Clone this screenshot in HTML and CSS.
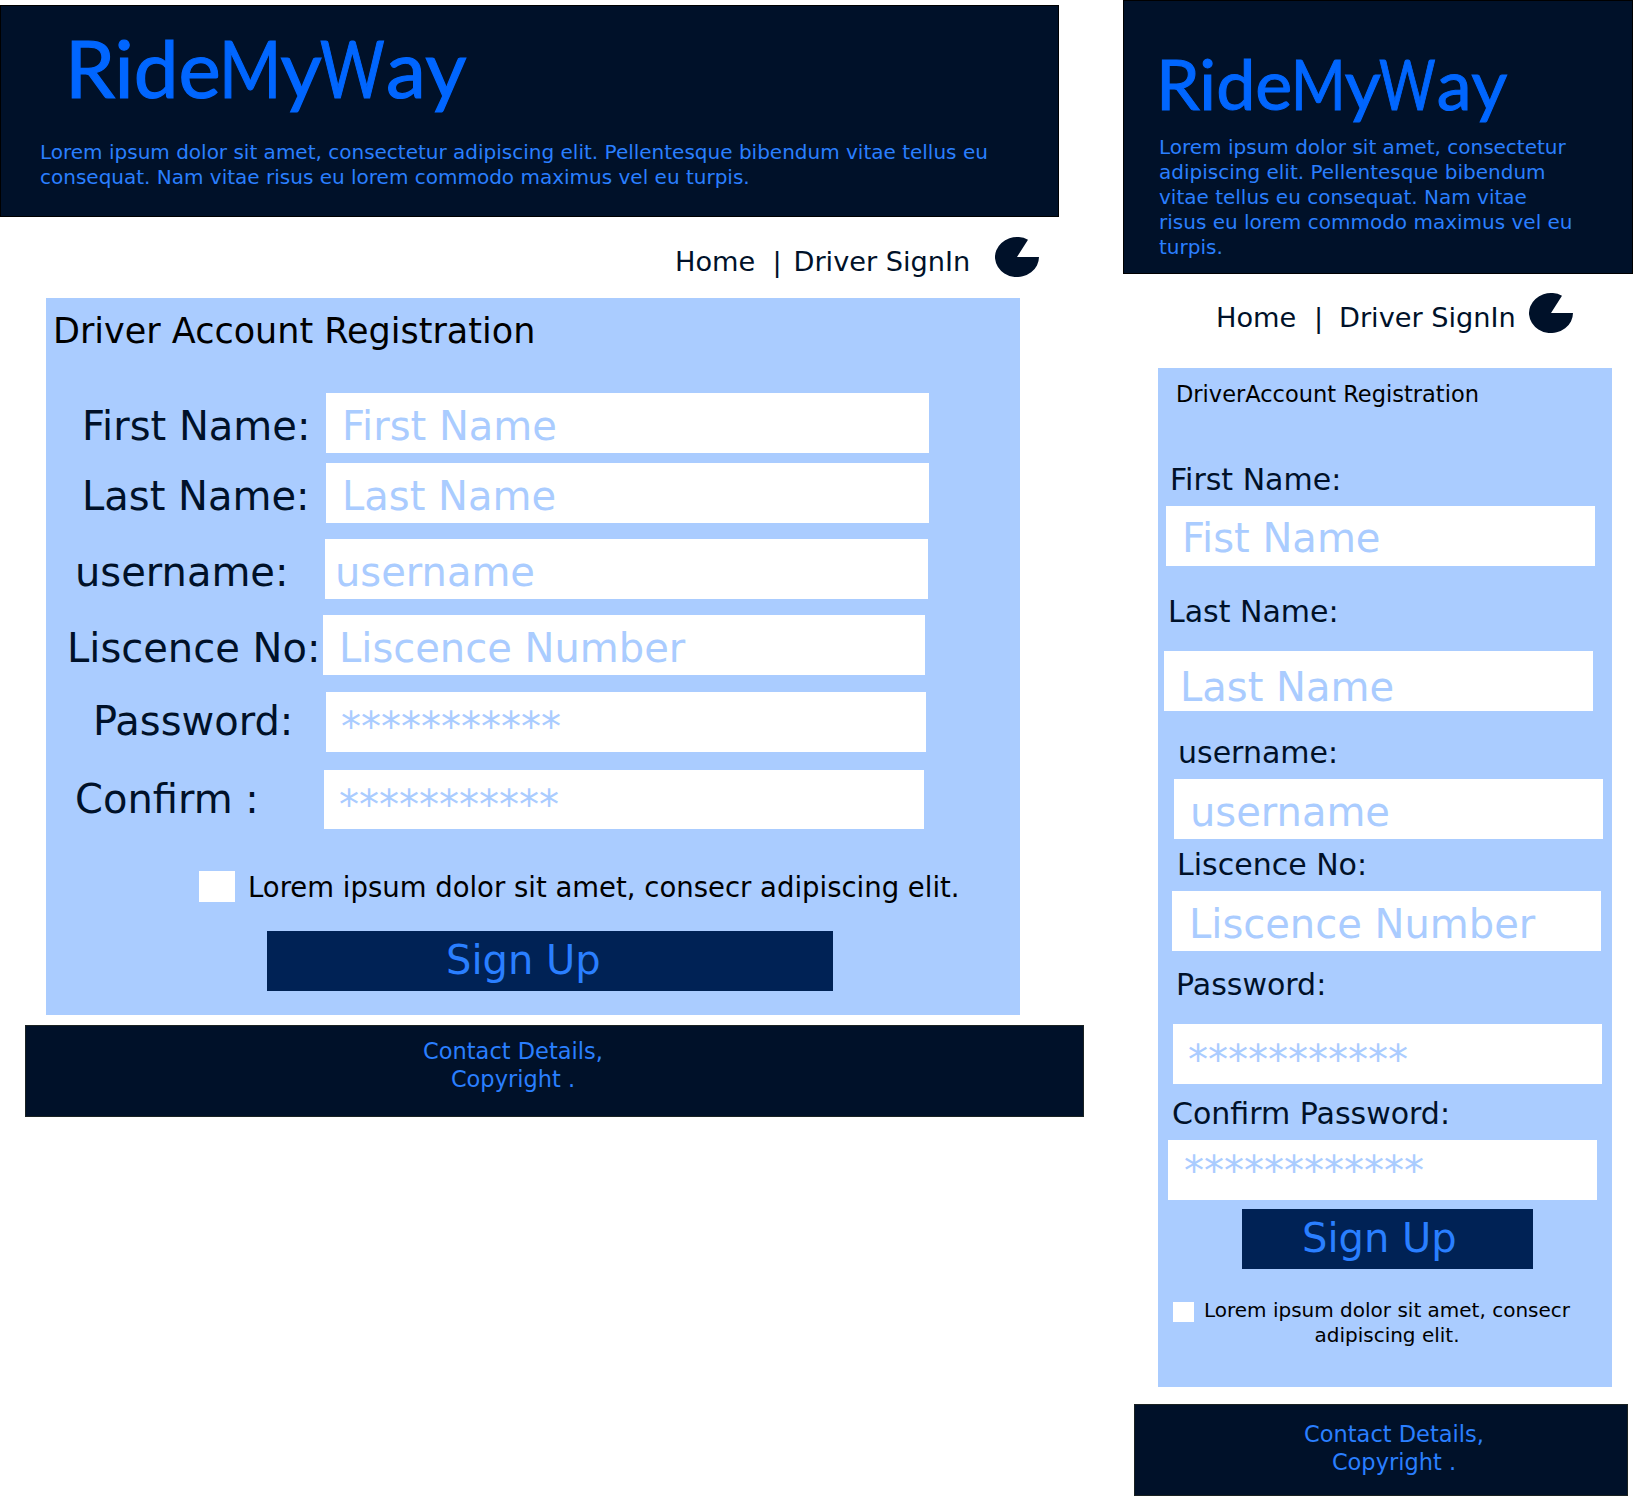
FILE: index.html
```html
<!DOCTYPE html>
<html lang="en">
<head>
<meta charset="utf-8">
<title>RideMyWay - Driver Account Registration</title>
<link rel="stylesheet" href="styles.css">
</head>
<body>
<div class="wide">
  <header class="banner">
    <h1 class="logo"><span class="ride">Ride</span><span class="cap-m">M</span><span class="low-y">y</span><span class="cap-w">W</span><span class="low-a">a</span><span class="low-y">y</span></h1>
    <p class="tagline">Lorem ipsum dolor sit amet, consectetur adipiscing elit. Pellentesque bibendum vitae tellus eu consequat. Nam vitae risus eu lorem commodo maximus vel eu turpis.</p>
  </header>
  <nav class="nav">
    <a class="home">Home</a><span class="bar">|</span><a class="signin">Driver SignIn</a>
    <svg class="pie" viewBox="0 0 44 40"><path d="M22 20H44A22 20 0 1 1 33 2.7Z"/></svg>
  </nav>
  <main class="panel">
    <h2 class="title">Driver Account Registration</h2>
    <div class="row first"><div class="label">First Name:</div><div class="field">First Name</div></div>
    <div class="row last"><div class="label">Last Name:</div><div class="field">Last Name</div></div>
    <div class="row user"><div class="label">username:</div><div class="field">username</div></div>
    <div class="row licence"><div class="label">Liscence No:</div><div class="field">Liscence Number</div></div>
    <div class="row pass"><div class="label">Password:</div><div class="field">***********</div></div>
    <div class="row confirm"><div class="label">Confirm :</div><div class="field">***********</div></div>
    <div class="terms"><span class="check"></span><p class="terms-text">Lorem ipsum dolor sit amet, consecr adipiscing elit.</p></div>
    <div class="button">Sign Up</div>
  </main>
  <footer class="footer"><p class="contact">Contact Details,<br>Copyright .</p></footer>
</div>
<div class="narrow">
  <header class="banner">
    <h1 class="logo"><span class="ride">Ride</span><span class="cap-m">M</span><span class="low-y">y</span><span class="cap-w">W</span><span class="low-a">a</span><span class="low-y">y</span></h1>
    <p class="tagline">Lorem ipsum dolor sit amet, consectetur adipiscing elit. Pellentesque bibendum vitae tellus eu consequat. Nam vitae risus eu lorem commodo maximus vel eu turpis.</p>
  </header>
  <nav class="nav">
    <a class="home">Home</a><span class="bar">|</span><a class="signin">Driver SignIn</a>
    <svg class="pie" viewBox="0 0 44 40"><path d="M22 20H44A22 20 0 1 1 33 2.7Z"/></svg>
  </nav>
  <main class="panel">
    <h2 class="title">DriverAccount Registration</h2>
    <div class="group first"><div class="label">First Name:</div><div class="field">Fist Name</div></div>
    <div class="group last"><div class="label">Last Name:</div><div class="field">Last Name</div></div>
    <div class="group user"><div class="label">username:</div><div class="field">username</div></div>
    <div class="group licence"><div class="label">Liscence No:</div><div class="field">Liscence Number</div></div>
    <div class="group pass"><div class="label">Password:</div><div class="field">***********</div></div>
    <div class="group confirm"><div class="label">Confirm Password:</div><div class="field">************</div></div>
    <div class="button">Sign Up</div>
    <div class="terms"><span class="check"></span><p class="terms-text">Lorem ipsum dolor sit amet, consecr adipiscing elit.</p></div>
  </main>
  <footer class="footer"><p class="contact">Contact Details,<br>Copyright .</p></footer>
</div>
</body>
</html>
```
FILE: styles.css
```css
* { box-sizing: border-box; margin: 0; padding: 0; }
body {
  display: flex;
  width: 1633px;
  height: 1496px;
  overflow: hidden;
  background: #fff;
  font-family: "DejaVu Sans", sans-serif;
  color: #001129;
}
.wide { width: 1123px; }
.narrow { width: 510px; }

.banner { background: #001129; border: 1px solid #000; overflow: hidden; }
.logo {
  display: flex;
  font-family: Lato, sans-serif;
  font-weight: 400;
  color: #0066ff;
  -webkit-text-stroke: 0.015em #0066ff;
  white-space: nowrap;
}
/* Wordmark: capitals are condensed and each part has its own advance */
.ride { width: 1.93em; }
.cap-m { width: 0.765em; transform: scaleX(0.84); transform-origin: left; }
.cap-w { width: 0.83em; transform: scaleX(0.78); transform-origin: left; }
.low-y { width: 0.4875em; }
.low-a { width: 0.49em; }
.tagline { font-size: 20px; line-height: 25px; color: #2a7fff; }
.nav { display: flex; font-size: 27.2px; line-height: 32px; white-space: nowrap; }
.pie { width: 44px; height: 40px; fill: #001129; flex: none; }
.panel { background: #aaccff; display: flow-root; }
.title { font-weight: 400; color: #000; white-space: nowrap; }
.label { white-space: nowrap; }
.field { height: 60px; background: #fff; color: #aaccff; font-size: 40px; white-space: nowrap; }
.check { background: #fff; flex: none; }
.terms { display: flex; color: #000; }
.button { height: 60px; background: #002255; color: #2a7fff; font-size: 40px; line-height: 58px; }
.footer { background: #001129; border: 1px solid #1a2222; overflow: hidden; }
.contact { color: #2a7fff; font-size: 22.5px; line-height: 28px; text-align: center; }

/* Wide layout */
.wide .banner { margin-top: 5px; width: 1059px; height: 212px; padding: 12px 0 0 39px; }
.wide .logo { margin-left: 25px; height: 122px; font-size: 80px; line-height: 98px; }
.wide .tagline { width: 970px; }
.wide .nav { margin: 20px 0 0 675px; height: 61px; }
.wide .nav a, .wide .bar { padding-top: 9px; }
.wide .home { width: 97.5px; }
.wide .bar { width: 21px; }
.wide .signin { width: 201.5px; }
.wide .panel { margin-left: 46px; width: 974px; height: 717px; }
.wide .title { margin: 13px 0 0 7px; height: 82px; font-size: 35px; line-height: 41px; }
.row { display: flex; height: 60px; font-size: 40px; line-height: 66px; }
.wide .first { margin: 0 0 10px 36px; }
.wide .first .label { width: 244px; }
.wide .first .field { width: 603px; padding-left: 16px; }
.wide .last { margin: 0 0 16px 36px; }
.wide .last .label { width: 244px; }
.wide .last .field { width: 603px; padding-left: 16px; }
.wide .user { margin: 0 0 16px 29px; }
.wide .user .label { width: 250px; }
.wide .user .field { width: 603px; padding-left: 10px; }
.wide .licence { margin: 0 0 17px 21px; }
.wide .licence .label { width: 256px; }
.wide .licence .field { width: 602px; padding-left: 16px; }
.wide .pass { margin: 0 0 18px 47px; line-height: 70px; }
.wide .pass .label { width: 233px; line-height: 58px; }
.wide .pass .field { width: 600px; padding-left: 15px; }
.wide .confirm { margin: 0 0 41px 29px; line-height: 70px; }
.wide .confirm .label { width: 249px; line-height: 58px; }
.wide .confirm .field { width: 600px; height: 59px; padding-left: 15px; }
.wide .terms { margin-left: 153px; font-size: 27.5px; line-height: 32px; white-space: nowrap; }
.wide .check { width: 36px; height: 31px; }
.wide .terms-text { margin: 0 0 0 13px; }
.wide .button { margin: 28px 0 0 221px; width: 566px; padding-left: 179px; }
.wide .footer { margin: 10px 0 0 25px; width: 1059px; height: 92px; }
.wide .contact { margin: 11px 0 0 387px; width: 200px; }

/* Narrow layout */
.narrow .banner { height: 274px; padding: 30px 0 0 35px; }
.narrow .logo { margin-left: -3px; height: 104px; font-size: 70px; line-height: 105px; }
.narrow .tagline { width: 418px; }
.narrow .nav { margin: 19px 0 0 93px; height: 75px; }
.narrow .nav a, .narrow .bar { padding-top: 9px; }
.narrow .home { width: 98px; }
.narrow .bar { width: 25px; }
.narrow .signin { width: 189.5px; }
.narrow .panel { margin-left: 35px; width: 454px; height: 1019px; }
.narrow .title { margin: 13px 0 0 18px; height: 81px; font-size: 22.5px; line-height: 26px; }
.narrow .label { height: 35px; font-size: 30px; line-height: 35px; }
.narrow .field { width: 429px; line-height: 66px; padding-left: 16px; }
.narrow .first { margin: 0 0 28px 8px; }
.narrow .first .label { margin: 0 0 9px 4px; }
.narrow .first .field { line-height: 64px; }
.narrow .last { margin: 0 0 24px 6px; }
.narrow .last .label { margin: 0 0 22px 4px; }
.narrow .last .field { line-height: 72px; }
.narrow .user { margin: 0 0 8px 16px; }
.narrow .user .label { margin: 0 0 9px 4px; }
.narrow .licence { margin: 0 0 16px 14px; }
.narrow .licence .label { margin: 0 0 9px 5px; }
.narrow .licence .field { padding-left: 17px; }
.narrow .pass { margin: 0 0 12px 15px; }
.narrow .pass .label { margin: 0 0 22px 3px; }
.narrow .pass .field { line-height: 72px; padding-left: 15px; }
.narrow .confirm { margin: 0 0 9px 10px; }
.narrow .confirm .label { margin: 0 0 9px 4px; }
.narrow .confirm .field { line-height: 62px; }
.narrow .button { margin-left: 84px; width: 291px; padding-left: 60px; }
.narrow .terms { margin: 29px 0 0 15px; font-size: 20px; line-height: 25px; }
.narrow .check { margin-top: 4px; width: 21px; height: 20px; }
.narrow .terms-text { margin-left: 2px; width: 382px; text-align: center; }
.narrow .footer { margin: 17px 0 0 11px; width: 494px; height: 92px; }
.narrow .contact { margin: 15px 0 0 159px; width: 200px; }
```
